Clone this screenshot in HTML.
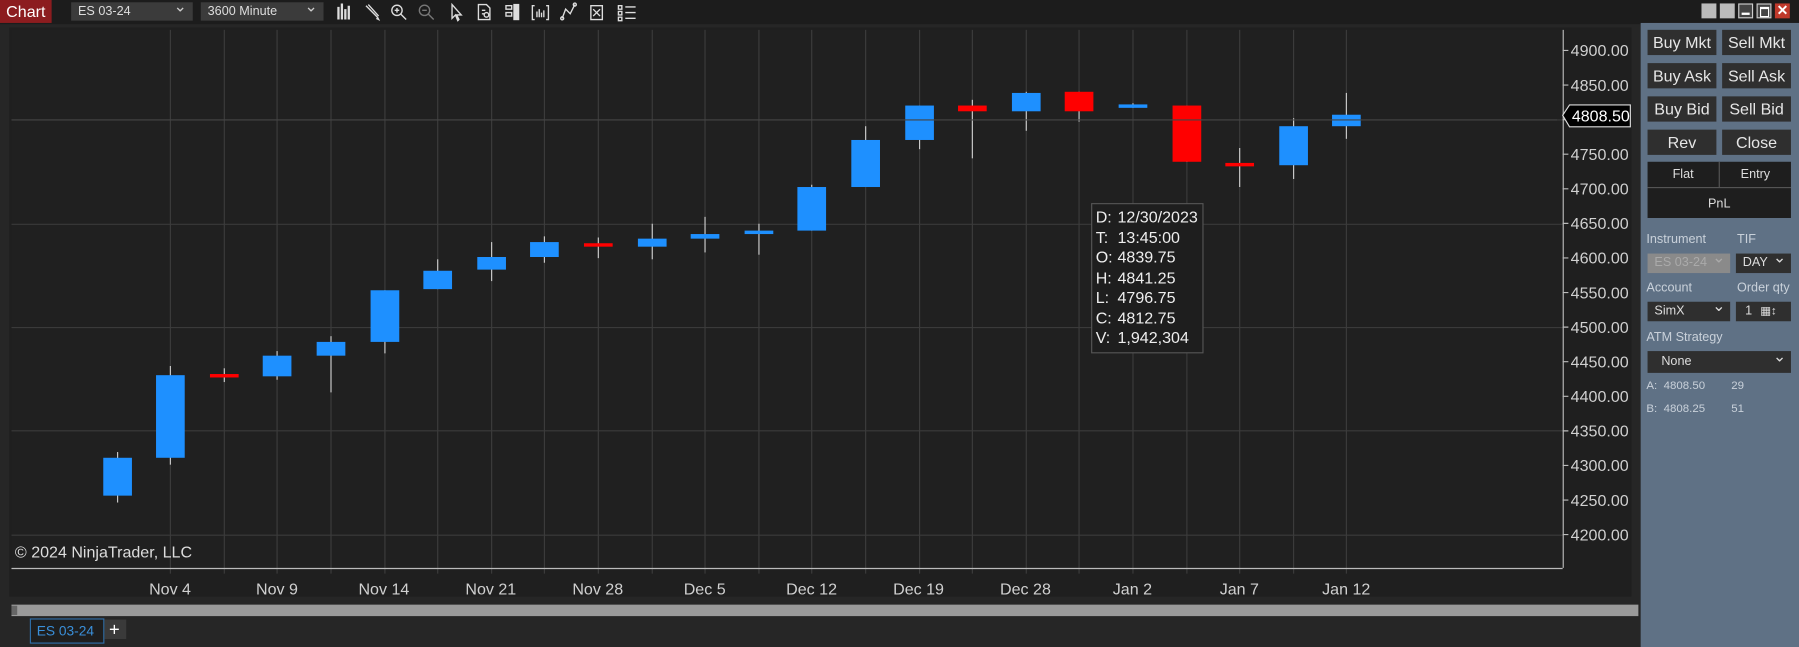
<!DOCTYPE html>
<html><head><meta charset="utf-8"><style>
html,body{margin:0;padding:0;background:#2a2a2a;overflow:hidden;width:1799px;height:647px}
#s{position:absolute;left:0;top:0;width:1568px;height:564px;transform:scale(1.14732);transform-origin:0 0;background:#262626;font-family:"Liberation Sans",sans-serif;color:#ddd}
.a{position:absolute}
.dd{position:absolute;background:#3b3b3b;color:#ddd;font-size:11px;line-height:16px;padding-left:6px;box-sizing:border-box}
.dd:after{content:"⌄";position:absolute;right:5px;top:-5px;font-size:14px;color:#ccc}
.btn{position:absolute;background:#2f2f2f;color:#e6e6e6;font-size:14px;text-align:center;line-height:22px;width:60px;height:22px}
.lbl{position:absolute;font-size:11px;color:#c9d1da}
.sel{position:absolute;background:#2f2f2f;color:#ddd;font-size:11px;line-height:17px;padding-left:6px;box-sizing:border-box;height:17px}
.sel:after{content:"⌄";position:absolute;right:4px;top:-5px;font-size:14px}
</style></head><body><div id="s">
<div class="a" style="left:0;top:0;width:1568px;height:21px;background:#1c1c1c"></div>
<div class="a" style="left:0;top:0;width:45px;height:20px;background:#8c1c1f;color:#fff;font-size:14px;line-height:20px;text-align:center">Chart</div>
<div class="dd" style="left:62px;top:2px;width:106px">ES 03-24</div>
<div class="dd" style="left:175px;top:2px;width:107px">3600 Minute</div>
<svg class="a" style="left:290px;top:2px" width="270" height="17" stroke="#ddd" fill="none" stroke-width="1.2">
<path d="M5 4v11M8 1v14M11 6v9M14 3v12" stroke-width="2"/>
<path d="M29 3l10 10M31 2l9 10M39 13l1 2-2-1"/>
<circle cx="56" cy="7" r="4.5"/><path d="M59 10l5 5M54 7h4M56 5v4"/>
<circle cx="80" cy="7" r="4.5" stroke="#777"/><path d="M83 10l5 5M78 7h4" stroke="#777"/>
<path d="M104 2v12l3-3 2 5 1-1-2-4h4z"/>
<path d="M127 2h7l3 3v10h-10zM130 7h3M130 10h2"/><circle cx="134" cy="11" r="2"/>
<path d="M151 3h5v3h-5zM151 9h5v3h-5z"/><rect x="158" y="2" width="4" height="13" fill="#ddd"/>
<path d="M176 3h-2v12h2M186 3h2v12h-2M178 8v5M180 6v7M182 9v4M184 7v6"/>
<path d="M200 14l3-8 4 4 4-8" /><circle cx="200" cy="14" r="1.3"/><circle cx="211" cy="2" r="1.3"/>
<path d="M225 3h10v12h-10zM227 6l6 6M233 6l-6 6"/>
<path d="M249 3h3v3h-3zM249 8h3v3h-3zM249 13h3v3h-3zM255 4h9M255 9h9M255 14h9"/>
</svg>
<div class="a" style="left:1483px;top:3px;width:13px;height:13px;background:#bbb"></div>
<div class="a" style="left:1499px;top:3px;width:13px;height:13px;background:#bbb"></div>
<div class="a" style="left:1515px;top:3px;width:13px;height:13px;background:#444;border:1px solid #ccc;box-sizing:border-box"><div class="a" style="left:2px;top:7px;width:7px;height:2px;background:#fff"></div></div>
<div class="a" style="left:1531px;top:3px;width:13px;height:13px;background:#444;border:1px solid #ccc;box-sizing:border-box"><div class="a" style="left:2px;top:2px;width:6px;height:6px;border:1px solid #fff;border-top-width:2px"></div></div>
<div class="a" style="left:1547px;top:3px;width:13px;height:13px;background:#c0392b;color:#fff;font-size:12px;line-height:13px;text-align:center;font-weight:bold">✕</div>

<svg class="a" style="left:0;top:0" width="1430" height="564">
<rect x="8" y="24" width="1414" height="496" fill="#1f1f1f"/>
<rect x="10" y="26" width="1352" height="469" fill="#202020"/>
<g stroke="#3a3a3a" stroke-width="1">
<path d="M10 104.5H1362M10 195.5H1362M10 285.5H1362M10 375.5H1362M10 466.5H1362"/>
</g>
<g stroke="#3c3c3c" id="g"></g>
<line x1="10" y1="495.5" x2="1362" y2="495.5" stroke="#bbb"/>
<line x1="1362.5" y1="26" x2="1362.5" y2="495" stroke="#bbb"/>
<g id="c"></g>
<g id="t" fill="#d0d0d0" font-size="14" font-family="Liberation Sans, sans-serif"></g>
<text x="13" y="486" fill="#ddd" font-size="14" font-family="Liberation Sans, sans-serif">© 2024 NinjaTrader, LLC</text>
<line x1="10" y1="104.5" x2="1357" y2="104.5" stroke="#444"/>
<path d="M1362 100.5l6-9h53v19h-53z" fill="#000" stroke="#ddd"/>
<text x="1370" y="106" fill="#fff" font-size="14" font-family="Liberation Sans, sans-serif">4808.50</text>
<rect x="951.5" y="177.5" width="97" height="130" fill="#1e1e1e" stroke="#555"/>
<g fill="#eee" font-size="14" font-family="Liberation Sans, sans-serif">
<text x="955" y="194">D:</text><text x="974" y="194">12/30/2023</text>
<text x="955" y="212">T:</text><text x="974" y="212">13:45:00</text>
<text x="955" y="229">O:</text><text x="974" y="229">4839.75</text>
<text x="955" y="247">H:</text><text x="974" y="247">4841.25</text>
<text x="955" y="264">L:</text><text x="974" y="264">4796.75</text>
<text x="955" y="282">C:</text><text x="974" y="282">4812.75</text>
<text x="955" y="299">V:</text><text x="974" y="299">1,942,304</text>
</g>
<rect x="10" y="527" width="1418" height="10" fill="#9a9a9a"/>
<rect x="10" y="528" width="5" height="8" fill="#666"/>
<rect x="26.5" y="539.5" width="64" height="21" fill="#1e1e1e" stroke="#2f6ea8"/>
<text x="32" y="554" fill="#3a8fd9" font-size="12" font-family="Liberation Sans, sans-serif">ES 03-24</text>
<rect x="91" y="540" width="19" height="17" fill="#3a3a3a"/>
<text x="95" y="554" fill="#fff" font-size="16" font-family="Liberation Sans, sans-serif">+</text>
</svg>

<div class="a" style="left:1430px;top:20px;width:138px;height:544px;background:#5f7185"></div>
<div class="btn" style="left:1436px;top:26px">Buy Mkt</div><div class="btn" style="left:1501px;top:26px">Sell Mkt</div>
<div class="btn" style="left:1436px;top:55px">Buy Ask</div><div class="btn" style="left:1501px;top:55px">Sell Ask</div>
<div class="btn" style="left:1436px;top:84px">Buy Bid</div><div class="btn" style="left:1501px;top:84px">Sell Bid</div>
<div class="btn" style="left:1436px;top:113px">Rev</div><div class="btn" style="left:1501px;top:113px">Close</div>
<div class="a" style="left:1436px;top:141px;width:125px;height:49px;background:#1e1e1e"></div>
<div class="a" style="left:1498px;top:141px;width:1px;height:22px;background:#555"></div>
<div class="a" style="left:1436px;top:163px;width:125px;height:1px;background:#555"></div>
<div class="a" style="left:1436px;top:146px;width:62px;text-align:center;font-size:11px">Flat</div>
<div class="a" style="left:1499px;top:146px;width:62px;text-align:center;font-size:11px">Entry</div>
<div class="a" style="left:1436px;top:172px;width:125px;text-align:center;font-size:11px">PnL</div>
<div class="lbl" style="left:1435px;top:203px">Instrument</div><div class="lbl" style="left:1514px;top:203px">TIF</div>
<div class="sel" style="left:1436px;top:221px;width:72px;background:#8a8a8a;color:#aaa">ES 03-24</div>
<div class="sel" style="left:1513px;top:221px;width:48px">DAY</div>
<div class="lbl" style="left:1435px;top:245px">Account</div><div class="lbl" style="left:1514px;top:245px">Order qty</div>
<div class="sel" style="left:1436px;top:263px;width:72px">SimX</div>
<div class="a" style="left:1513px;top:263px;width:48px;height:17px;background:#2f2f2f;font-size:11px;line-height:17px;padding-left:8px;box-sizing:border-box">1 <span style="font-size:10px;margin-left:4px">▦↕</span></div>
<div class="lbl" style="left:1435px;top:288px">ATM Strategy</div>
<div class="sel" style="left:1436px;top:306px;width:125px;height:19px;line-height:19px;padding-left:12px">None</div>
<div class="lbl" style="left:1435px;top:331px;font-size:10px">A:&nbsp; 4808.50</div><div class="lbl" style="left:1509px;top:331px;font-size:10px">29</div>
<div class="lbl" style="left:1435px;top:351px;font-size:10px">B:&nbsp; 4808.25</div><div class="lbl" style="left:1509px;top:351px;font-size:10px">51</div>
</div>
<script>
var d=[[399,432,394,438,1],[327,399,319,405,1],[326,328,321,333,0],[310,328,306,331,1],[298,310,293,342,1],[253,298,253,308,1],[236,252,226,252,1],[224,235,211,245,1],[211,224,206,229,1],[212,215,207,225,0],[208,215,195,226,1],[204,208,189,220,1],[201,204,195,222,1],[163,201,161,201,1],[122,163,110,163,1],[92,122,92,130,1],[92,97,87,138,0],[81,97,80,114,1],[80,97,80,106,0],[91,94,90,94,1],[92,141,92,141,0],[142,144,129,163,0],[110,144,103,156,1],[100,110,81,121,1]];
var ns="http://www.w3.org/2000/svg",g=document.getElementById('g'),c=document.getElementById('c'),t=document.getElementById('t');
function el(p,n,a){var e=document.createElementNS(ns,n);for(var k in a)e.setAttribute(k,a[k]);p.appendChild(e);return e;}
d.forEach(function(r,i){var x=Math.round(101.6+46.6*i)+.5;
if(i>0)el(g,'line',{x1:x,y1:26,x2:x,y2:500});
el(c,'line',{x1:x,y1:r[2],x2:x,y2:r[3],stroke:'#ccc'});
el(c,'rect',{x:x-12.5,y:r[0],width:25,height:Math.max(3,r[1]-r[0]),fill:r[4]?'#1e90ff':'#ff0000'});});
var L=["Nov 4","Nov 9","Nov 14","Nov 21","Nov 28","Dec 5","Dec 12","Dec 19","Dec 28","Jan 2","Jan 7","Jan 12"];
L.forEach(function(s,i){var x=101.6+46.6*(1+2*i);var e=el(t,'text',{x:x,y:518,'text-anchor':'middle'});e.textContent=s;});
for(var p=4900;p>=4200;p-=50){var y=44+(4900-p)/50*30.14;el(c,'line',{x1:1362,y1:y,x2:1367,y2:y,stroke:'#bbb'});
var e=el(t,'text',{x:1369,y:y+5});e.textContent=p.toFixed(2);}
</script>
</body></html>
